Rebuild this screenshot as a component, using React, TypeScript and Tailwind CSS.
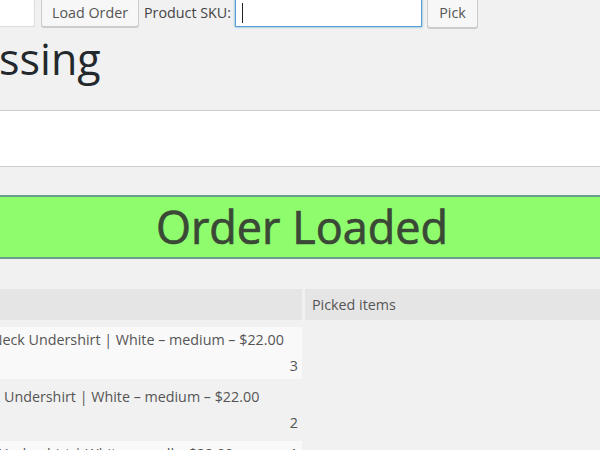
import React from "react";

const rows = [
  { name: "Crew Neck Undershirt | White – medium – $22.00", qty: "3", bg: "bg-[#f9f9f9]", inline: false },
  { name: "V-Neck Undershirt | White – medium – $22.00", qty: "2", bg: "bg-[#f1f1f1]", inline: false },
  { name: "Scoop Undershirt | White – small – $22.00", qty: "1", bg: "bg-[#f9f9f9]", inline: true },
];

export default function App() {
  return (
    <div className="w-[600px] h-[450px] overflow-hidden bg-[#f1f1f1] font-['Open_Sans',sans-serif] text-[#555]">
      {/* Top controls */}
      <div className="flex items-center h-[30px] mt-[-3px]">
        <div className="shrink-0 w-[140px] ml-[-105px] h-[30px] bg-white border border-[#dddddd] shadow-[inset_0_1px_2px_rgba(0,0,0,0.07)]" />
        <button className="shrink-0 ml-[6px] w-[98px] h-[30px] bg-[#f7f7f7] border border-[#cccccc] rounded-[3px] shadow-[0_1px_0_#cccccc] text-[14.3px] text-[#555] leading-none pt-[2px]">
          Load Order
        </button>
        <span className="shrink-0 ml-[5px] text-[14.3px] text-[#444] leading-none pt-[3px]">Product SKU:</span>
        <div className="shrink-0 ml-[4px] w-[187px] h-[30px] bg-white border border-[#5b9dd9] shadow-[0_0_2px_rgba(30,140,190,0.8)] flex items-start">
          <div className="ml-[6px] mt-[5px] w-[1px] h-[20px] bg-[#222]" />
        </div>
        <button className="shrink-0 ml-[5px] w-[51px] h-[31px] bg-[#f7f7f7] border border-[#cccccc] rounded-[3px] shadow-[0_1px_0_#cccccc] text-[14.3px] text-[#555] leading-none pt-[3px]">
          Pick
        </button>
      </div>

      {/* Heading */}
      <h1 className="mt-[10px] ml-[-115px] whitespace-nowrap text-[43px] leading-[44px] font-normal text-[#23282d]">
        Processing
      </h1>

      {/* White box */}
      <div className="mt-[29px] h-[57px] bg-white border-y border-[#cccccc]" />

      {/* Green notice */}
      <div className="mt-[28px] h-[64px] bg-[#8ffc6e] border-y-2 border-[#6a9e8c] flex items-center justify-center pl-[4px]">
        <span className="text-[45px] leading-none font-normal text-[#3a4836] [-webkit-text-stroke:0.7px_#3a4836] pb-[2px]">Order Loaded</span>
      </div>

      {/* Table */}
      <div className="mt-[30px] flex gap-[3px]">
        <div className="shrink-0 w-[362px] ml-[-60px] flex flex-col">
          <div className="h-[31px] bg-[#e5e5e5]" />
          <div className="flex flex-col gap-[5px] mt-[7px]">
            {rows.map((r) => (
              <div key={r.qty} className={`h-[52px] ${r.bg} text-[14.3px] text-[#555]`}>
                {r.inline ? (
                  <div className="h-[26px] leading-[26px] pl-[14px] pr-[4px] flex justify-between whitespace-nowrap">
                    <span>{r.name}</span>
                    <span>{r.qty}</span>
                  </div>
                ) : (
                  <>
                    <div className="h-[26px] leading-[26px] pl-[14px] whitespace-nowrap">{r.name}</div>
                    <div className="h-[26px] leading-[26px] pr-[4px] text-right">{r.qty}</div>
                  </>
                )}
              </div>
            ))}
          </div>
        </div>
        <div className="flex-1 min-w-[300px]">
          <div className="h-[31px] bg-[#e5e5e5] pl-[7px] text-[14.3px] leading-[31px] text-[#555]">Picked items</div>
        </div>
      </div>
    </div>
  );
}
